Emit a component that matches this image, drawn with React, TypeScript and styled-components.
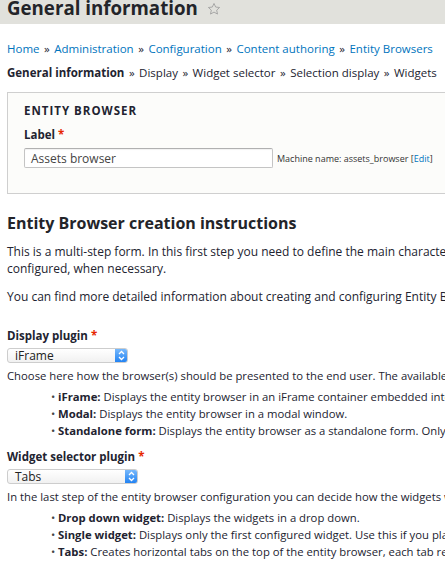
import React from "react";
import styled, { createGlobalStyle } from "styled-components";

const GlobalStyle = createGlobalStyle`
  html, body { margin: 0; padding: 0; overflow: hidden; background: #ffffff; }
  body {
    font-family: "Open Sans", "Noto Sans", sans-serif;
    color: #222330;
    font-size: 11.5px;
    line-height: 17px;
  }
  * { box-sizing: border-box; }
`;

const Page = styled.div`
  width: 860px;
`;

const Header = styled.header`
  height: 24px;
  background: #e1e1dc;
  padding: 0 7px;
  display: flex;
  align-items: flex-start;
  gap: 9px;
`;

const Title = styled.h1`
  margin: 0;
  font-size: 18.7px;
  line-height: 16px;
  font-weight: 700;
  color: #232429;
`;

const StarIcon = styled.svg`
  width: 14px;
  height: 14px;
  margin-top: 2px;
`;

const Main = styled.main`
  padding: 0 7px;
`;

const Breadcrumb = styled.nav`
  margin-top: 16px;
  white-space: nowrap;
  color: #222330;
`;

const Sep = styled.span`
  margin: 0 1.5px;
`;

const Link = styled.a`
  color: #0074bd;
  text-decoration: none;
`;

const Steps = styled.div`
  margin-top: 7px;
  white-space: nowrap;
`;

const Current = styled.strong`
  font-weight: 700;
`;

const Panel = styled.section`
  margin-top: 11px;
  border: 1px solid #cfcfcf;
  background: #fcfcfa;
  padding: 9px 16px 25px;
`;

const PanelTitle = styled.div`
  font-weight: 700;
  text-transform: uppercase;
  letter-spacing: 1px;
  color: #222330;
`;

const FieldLabel = styled.label<{ $gap: number }>`
  display: block;
  margin-top: ${(p) => p.$gap}px;
  font-weight: 700;
  color: #222330;
`;

const Required = styled.span`
  color: #e62600;
  margin-left: 3px;
`;

const InputRow = styled.div`
  margin-top: 5px;
  display: flex;
  align-items: center;
  gap: 4px;
`;

const TextInput = styled.div`
  width: 249px;
  height: 20px;
  border: 1px solid #c4c4c4;
  border-top-color: #b0b0b0;
  border-radius: 2px;
  background: #ffffff;
  box-shadow: inset 0 1px 1px rgba(0, 0, 0, 0.06);
  padding-left: 6px;
  display: flex;
  align-items: center;
  font-size: 12px;
  color: #444;
`;

const MachineName = styled.span`
  font-size: 9px;
  color: #333;
  white-space: nowrap;
`;

const Heading = styled.h2`
  margin: 20px 0 0;
  font-size: 16px;
  line-height: 18px;
  font-weight: 700;
  color: #232429;
`;

const Para = styled.p<{ $gap: number }>`
  margin: ${(p) => p.$gap}px 0 0;
  font-size: 12px;
  white-space: nowrap;
`;

const SelectBox = styled.div<{ $w: number; $gap: number }>`
  margin-top: ${(p) => p.$gap}px;
  width: ${(p) => p.$w}px;
  height: 15px;
  border: 1px solid #cdcdcd;
  border-radius: 3px;
  background: linear-gradient(#ffffff, #f1f1f1);
  display: flex;
  align-items: center;
  justify-content: space-between;
  padding-left: 7px;
  font-size: 12px;
  color: #222;
  overflow: hidden;
`;

const Stepper = styled.span`
  width: 13px;
  height: 15px;
  margin: -1px -1px -1px 0;
  border-radius: 0 3px 3px 0;
  background: linear-gradient(#7dbcfc, #1c7ff2);
  display: flex;
  align-items: center;
  justify-content: center;
`;

const Description = styled.div`
  margin-top: 4px;
  font-size: 11.3px;
  white-space: nowrap;
`;

const List = styled.ul`
  margin: 4px 0 0;
  padding: 0 0 0 51px;
  list-style: none;
  font-size: 11.3px;
`;

const Item = styled.li`
  position: relative;
  white-space: nowrap;
  &::before {
    content: "•";
    position: absolute;
    left: -7px;
    top: 0;
    color: #444;
  }
`;

const Star = () => (
  <StarIcon viewBox="0 0 24 24">
    <path
      d="M12 2.5l2.9 6.2 6.7.7-5 4.6 1.4 6.7L12 17.3l-6 3.4 1.4-6.7-5-4.6 6.7-.7z"
      fill="none"
      stroke="#9a9a9a"
      strokeWidth="1.4"
      strokeLinejoin="round"
    />
  </StarIcon>
);

const Arrows = () => (
  <svg width="7" height="11" viewBox="0 0 7 11">
    <path d="M1 4l2.5-2.5L6 4M1 7l2.5 2.5L6 7" fill="none" stroke="#fff" strokeWidth="1.3" />
  </svg>
);

const Select = ({ value, width, gap }: { value: string; width: number; gap: number }) => (
  <SelectBox $w={width} $gap={gap}>
    <span>{value}</span>
    <Stepper>
      <Arrows />
    </Stepper>
  </SelectBox>
);

const S = () => <Sep>»</Sep>;

export default function App() {
  return (
    <Page>
      <GlobalStyle />
      <Header>
        <Title>General information</Title>
        <Star />
      </Header>
      <Main>
        <Breadcrumb>
          <Link href="#">Home</Link> <S /> <Link href="#">Administration</Link> <S />{" "}
          <Link href="#">Configuration</Link> <S /> <Link href="#">Content authoring</Link> <S />{" "}
          <Link href="#">Entity Browsers</Link>
        </Breadcrumb>
        <Steps>
          <Current>General information</Current> <S /> Display <S /> Widget selector <S /> Selection
          display <S /> Widgets
        </Steps>
        <Panel>
          <PanelTitle>Entity browser</PanelTitle>
          <FieldLabel $gap={7}>
            Label<Required>*</Required>
          </FieldLabel>
          <InputRow>
            <TextInput>Assets browser</TextInput>
            <MachineName>
              Machine name: assets_browser [<Link href="#">Edit</Link>]
            </MachineName>
          </InputRow>
        </Panel>
        <Heading>Entity Browser creation instructions</Heading>
        <Para $gap={11}>
          This is a multi-step form. In this first step you need to define the main characteristics of the
          Entity Browser (in other words, give it a name and choose the plugins). Each plugin will be
          <br />
          configured, when necessary.
        </Para>
        <Para $gap={11}>
          You can find more detailed information about creating and configuring Entity Browsers at the
          official documentation.
        </Para>
        <FieldLabel $gap={22}>
          Display plugin<Required>*</Required>
        </FieldLabel>
        <Select value="iFrame" width={121} gap={4} />
        <Description>
          Choose here how the browser(s) should be presented to the end user. The available plugins are:
        </Description>
        <List>
          <Item>
            <strong>iFrame:</strong> Displays the entity browser in an iFrame container embedded into the
            main page.
          </Item>
          <Item>
            <strong>Modal:</strong> Displays the entity browser in a modal window.
          </Item>
          <Item>
            <strong>Standalone form:</strong> Displays the entity browser as a standalone form. Only useful
            for advanced use cases.
          </Item>
        </List>
        <FieldLabel $gap={9}>
          Widget selector plugin<Required>*</Required>
        </FieldLabel>
        <Select value="Tabs" width={131} gap={4} />
        <Description>
          In the last step of the entity browser configuration you can decide how the widgets will be
          available to the editor.
        </Description>
        <List>
          <Item>
            <strong>Drop down widget:</strong> Displays the widgets in a drop down.
          </Item>
          <Item>
            <strong>Single widget:</strong> Displays only the first configured widget. Use this if you plan
            to have only one widget.
          </Item>
          <Item>
            <strong>Tabs:</strong> Creates horizontal tabs on the top of the entity browser, each tab
            representing one widget.
          </Item>
        </List>
      </Main>
    </Page>
  );
}
